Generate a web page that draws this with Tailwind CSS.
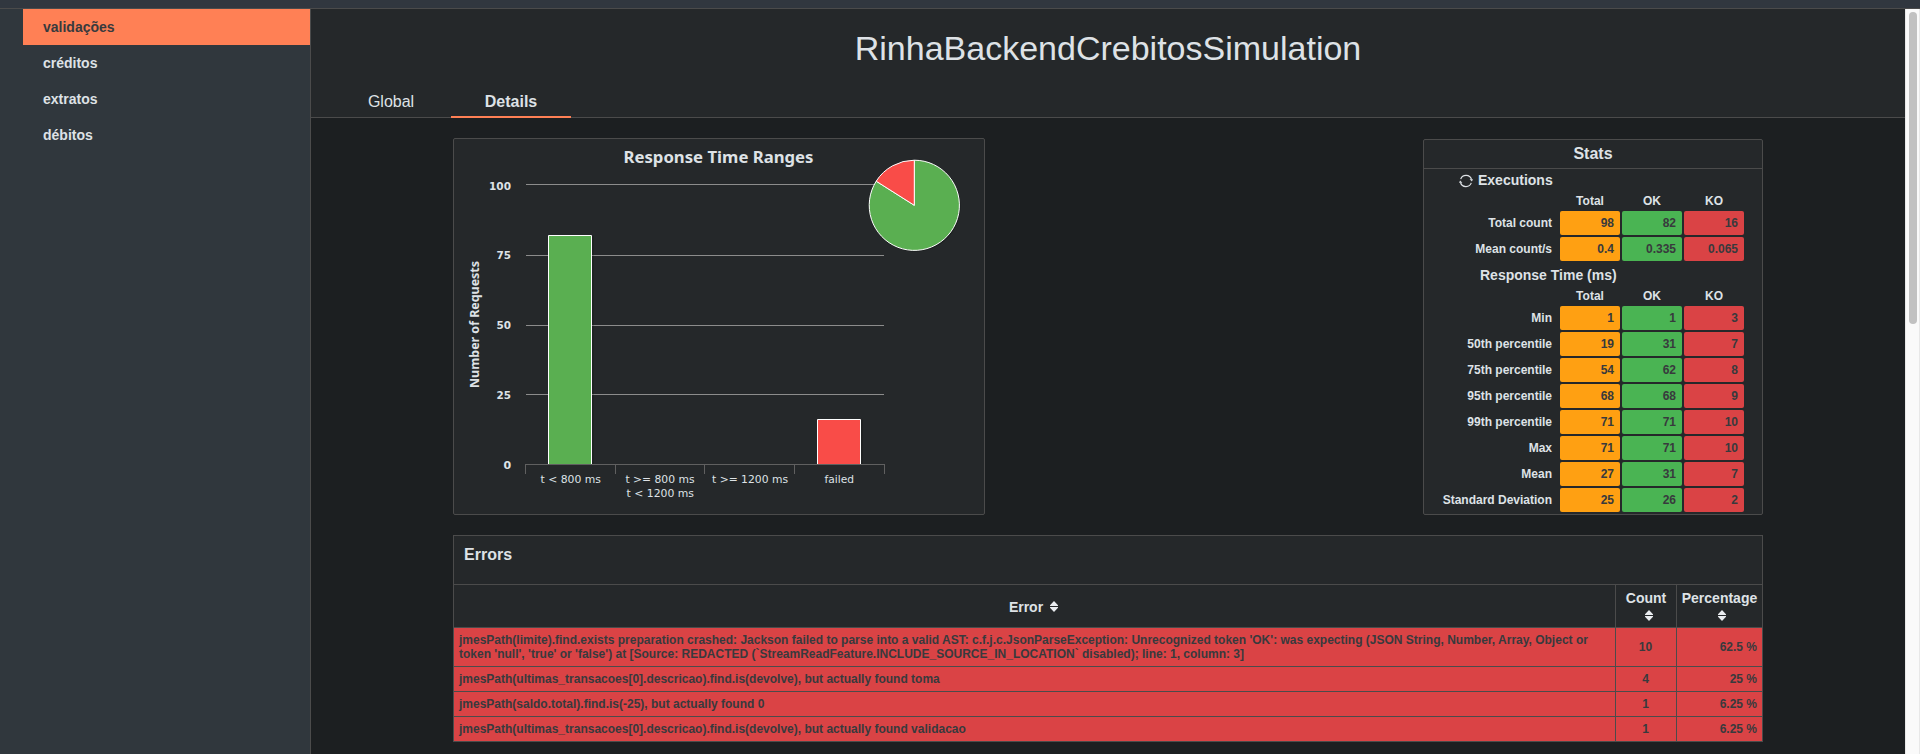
<!DOCTYPE html>
<html lang="pt">
<head>
<meta charset="utf-8">
<title>RinhaBackendCrebitosSimulation</title>
<script src="https://cdn.jsdelivr.net/npm/@tailwindcss/browser@4"></script>
</head>
<body class="h-[754px] w-[1920px] overflow-hidden bg-[#1c1f21] font-['Liberation_Sans',Arial,sans-serif] text-[#dee2e6]">
<div class="flex h-full flex-col">
  <header class="h-[9px] shrink-0 border-b border-[#4b4b4b] bg-[#31373f]"></header>
  <div class="flex min-h-0 flex-1">
    <nav class="w-[311px] shrink-0 border-r border-[#4b4b4b] bg-[#30373d] pl-[23px] text-sm font-bold">
      <a class="flex h-9 items-center bg-[#ff8055] pl-5 text-[#383a3d]">validações</a>
      <a class="flex h-9 items-center pl-5">créditos</a>
      <a class="flex h-9 items-center pl-5">extratos</a>
      <a class="flex h-9 items-center pl-5">débitos</a>
    </nav>
    <main class="min-w-0 flex-1">
      <div class="flex h-[109px] flex-col justify-between border-b border-[#4b4b4b] bg-[#25282a]">
        <h1 class="pt-[19px] text-center text-[34px] leading-10">RinhaBackendCrebitosSimulation</h1>
        <div class="-mb-px flex pl-5">
          <a class="flex h-9 w-[120px] items-center justify-center border-b-2 border-transparent pt-1.5">Global</a>
          <a class="flex h-9 w-[120px] items-center justify-center border-b-2 border-[#ff8055] pt-1.5 font-bold">Details</a>
        </div>
      </div>
      <div class="ml-[142px] w-[1310px] pt-5">
        <div class="flex items-start justify-between">
          <div class="h-[377px] w-[532px] rounded-xs border border-[#4b4b4b] bg-[#25282a]">
            <svg class="block font-['Noto_Sans','Open_Sans',sans-serif]" width="530" height="375" viewBox="454 139 530 375" fill="#dee2e6">
              <g stroke="#8c8c8c"><path d="M526 184.5H884M526 255.5H884M526 325.5H884M526 394.5H884"/></g>
              <g fill="none" stroke="#000" stroke-opacity=".15"><path stroke-width="3" d="M550 465V237H592.5V464M819 464V421H861.5V464"/></g>
              <path fill="#5aaf51" stroke="#fff" d="M548.5 464V235.5H591.5V464"/>
              <path fill="#f94c48" stroke="#fff" d="M817.5 464V419.5H860.5V464"/>
              <path fill="none" stroke="#606060" d="M525 464.5H885M525.5 464V474M615.5 464V474M704.5 464V474M794.5 464V474M884.5 464V474"/>
              <circle cx="915" cy="206.300" r="45.500" fill="#000" fill-opacity=".25"/>
              <path fill="#5aaf51" stroke="#fff" stroke-linejoin="round" d="M914.300 205.300V160.200A45.100 45.100 0 1 1 876.200 181.200Z"/>
              <path fill="#f94c48" stroke="#fff" stroke-linejoin="round" d="M914.300 205.300L876.200 181.200A45.100 45.100 0 0 1 914.300 160.200Z"/>
              <text x="623.500" y="163" font-size="16" font-weight="700" textLength="190" lengthAdjust="spacingAndGlyphs">Response Time Ranges</text>
              <g class="font-['DejaVu_Sans',sans-serif]" font-size="11" font-weight="700">
                <text x="489" y="190" textLength="22" lengthAdjust="spacingAndGlyphs">100</text>
                <text x="496.500" y="259" textLength="14.500" lengthAdjust="spacingAndGlyphs">75</text>
                <text x="496.500" y="329" textLength="14.500" lengthAdjust="spacingAndGlyphs">50</text>
                <text x="496.500" y="399" textLength="14.500" lengthAdjust="spacingAndGlyphs">25</text>
                <text x="503.500" y="469">0</text>
              </g>
              <text transform="translate(479 388) rotate(-90)" font-size="12" font-weight="700" textLength="127" lengthAdjust="spacingAndGlyphs">Number of Requests</text>
              <g class="font-['DejaVu_Sans',sans-serif]" font-size="11">
                <text x="540.500" y="483" textLength="60.500" lengthAdjust="spacingAndGlyphs">t &lt; 800 ms</text>
                <text x="625.500" y="483" textLength="69" lengthAdjust="spacingAndGlyphs">t &gt;= 800 ms</text>
                <text x="626.500" y="497" textLength="67.500" lengthAdjust="spacingAndGlyphs">t &lt; 1200 ms</text>
                <text x="712" y="483" textLength="76" lengthAdjust="spacingAndGlyphs">t &gt;= 1200 ms</text>
                <text x="824.500" y="483" textLength="29.500" lengthAdjust="spacingAndGlyphs">failed</text>
              </g>
            </svg>
          </div>
          <div class="mt-px h-[376px] w-[340px] rounded-xs border border-[#4b4b4b] bg-[#25282a] font-bold">
            <div class="flex h-[29px] items-center justify-center border-b border-[#4b4b4b]">Stats</div>
            <div class="flex h-[23px] items-center pl-[35px] text-sm leading-[19px]">
              <svg class="mr-[5px]" width="14" height="14" viewBox="0 0 14 14" fill="none" stroke="#dee2e6" stroke-width="1.200"><path d="M1.700 5.100A5.700 5.700 0 0 1 12.500 5.500M12.300 8.900A5.700 5.700 0 0 1 1.500 8.500"/><path stroke="none" fill="#dee2e6" d="M10.600 5.200H14L12.900 7.600ZM0 8.800L1.100 6.400L3.400 8.800Z"/></svg>
              Executions
            </div>
            <div id="exec"></div>
            <div class="flex h-6 items-center pl-14 text-sm">Response Time (ms)</div>
            <div id="resp"></div>
          </div>
        </div>
        <div class="mt-5 border border-[#4b4b4b] bg-[#25282a] font-bold">
          <div class="h-[49px] border-b border-[#4b4b4b] pl-2.5 pt-[9px] leading-5">Errors</div>
          <div id="errors" class="grid grid-cols-[1161px_61px_86px] text-xs leading-[14px] text-[#383a3d]">
            <div class="flex h-[42px] items-center justify-center gap-[7px] pr-0.5 pt-px text-sm text-[#dee2e6]">Error <svg width="8" height="11" viewBox="0 0 8 11" fill="#e9ecef"><path d="M4 0L8 4.300V5H0V4.300ZM0 6H8V6.700L4 11L0 6.700Z"/></svg></div>
            <div class="flex h-[42px] flex-col items-center gap-1 border-l border-[#4b4b4b] pt-[5px] text-sm leading-4 text-[#dee2e6]">Count <svg class="ml-[5px] shrink-0" width="8" height="11" viewBox="0 0 8 11" fill="#e9ecef"><path d="M4 0L8 4.300V5H0V4.300ZM0 6H8V6.700L4 11L0 6.700Z"/></svg></div>
            <div class="flex h-[42px] flex-col items-center gap-1 border-l border-[#4b4b4b] pt-[5px] text-sm leading-4 text-[#dee2e6]">Percentage <svg class="ml-[4px] shrink-0" width="8" height="11" viewBox="0 0 8 11" fill="#e9ecef"><path d="M4 0L8 4.300V5H0V4.300ZM0 6H8V6.700L4 11L0 6.700Z"/></svg></div>
          </div>
        </div>
      </div>
    </main>
    <aside class="w-[15px] shrink-0 border-x border-[#e8e8e8] bg-[#fafafa] px-[3px] pt-[3px]"><div class="h-[312px] w-2 rounded-full bg-[#c1c1c1]"></div></aside>
  </div>
</div>
<script>
const head = '<div class="grid h-[19px] grid-cols-[134px_60px_60px_60px] gap-x-0.5 text-center text-xs leading-[18px]"><span></span><span>Total</span><span>OK</span><span>KO</span></div>';
const cell = (v, c) => `<span class="rounded-xs pr-1.5 text-[#383a3d] ${c}">${v}</span>`;
const row = ([n, a, b, c]) => `<div class="mb-0.5 grid grid-cols-[134px_60px_60px_60px] gap-x-0.5 text-right text-xs leading-6"><span class="pr-1.5">${n}</span>${cell(a, 'bg-[#ffa012]')}${cell(b, 'bg-[#4ab453]')}${cell(c, 'bg-[#da4345]')}</div>`;
const table = (id, rows) => document.getElementById(id).innerHTML = head + rows.map(row).join('');
table('exec', [['Total count', 98, 82, 16], ['Mean count/s', 0.4, 0.335, 0.065]]);
table('resp', [['Min', 1, 1, 3], ['50th percentile', 19, 31, 7], ['75th percentile', 54, 62, 8], ['95th percentile', 68, 68, 9], ['99th percentile', 71, 71, 10], ['Max', 71, 71, 10], ['Mean', 27, 31, 7], ['Standard Deviation', 25, 26, 2]]);
document.getElementById('errors').innerHTML += [
  ["jmesPath(limite).find.exists preparation crashed: Jackson failed to parse into a valid AST: c.f.j.c.JsonParseException: Unrecognized token 'OK': was expecting (JSON String, Number, Array, Object or<br>token 'null', 'true' or 'false') at [Source: REDACTED (`StreamReadFeature.INCLUDE_SOURCE_IN_LOCATION` disabled); line: 1, column: 3]", 10, '62.5 %'],
  ['jmesPath(ultimas_transacoes[0].descricao).find.is(devolve), but actually found toma', 4, '25 %'],
  ['jmesPath(saldo.total).find.is(-25), but actually found 0', 1, '6.25 %'],
  ['jmesPath(ultimas_transacoes[0].descricao).find.is(devolve), but actually found validacao', 1, '6.25 %']
].map(([e, n, p]) => `<div class="whitespace-nowrap border-t border-[#4b4b4b] bg-[#da4345] px-[5px] py-[5px]">${e}</div><div class="flex items-center justify-center border-l border-t border-[#4b4b4b] bg-[#da4345] pr-px">${n}</div><div class="flex items-center justify-end border-l border-t border-[#4b4b4b] bg-[#da4345] pr-[5px]">${p}</div>`).join('');
</script>
</body>
</html>
